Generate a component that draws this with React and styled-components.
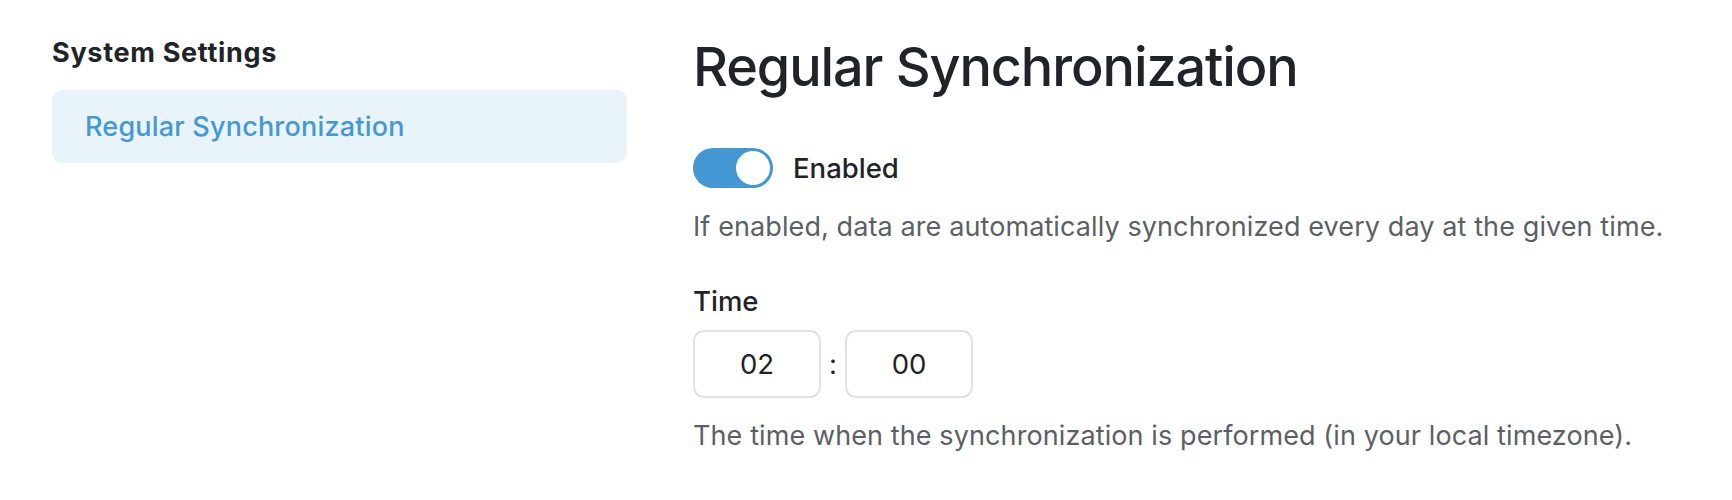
import React, { useState } from "react";
import styled, { createGlobalStyle } from "styled-components";

const GlobalStyle = createGlobalStyle`
  * { box-sizing: border-box; }
  body {
    margin: 0;
    background: #ffffff;
    font-family: Inter, "Noto Sans", sans-serif;
    color: #202328;
  }
`;

const Page = styled.div`
  display: flex;
  align-items: flex-start;
  gap: 66px;
  padding: 33px 0 0 52px;
`;

const Sidebar = styled.aside`
  width: 575px;
  flex-shrink: 0;
  display: flex;
  flex-direction: column;
`;

const SidebarTitle = styled.h2`
  margin: 0 0 17px;
  font-size: 27px;
  line-height: 40px;
  font-weight: 700;
  letter-spacing: 0.7px;
  color: #202328;
`;

const NavItem = styled.div`
  height: 73px;
  display: flex;
  align-items: center;
  padding: 0 33px;
  border-radius: 11px;
  background: ${(p) => (p.active ? "#e8f3fa" : "transparent")};
  color: ${(p) => (p.active ? "#4498d3" : "#202328")};
  font-size: 27px;
  font-weight: 500;
  letter-spacing: 0.2px;
`;

const Main = styled.main`
  display: flex;
  flex-direction: column;
  align-items: flex-start;
`;

const Heading = styled.h1`
  margin: 0 0 48px;
  font-size: 54px;
  line-height: 67px;
  font-weight: 500;
  letter-spacing: -1.1px;
  color: #202328;
`;

const ToggleRow = styled.label`
  display: flex;
  align-items: center;
  gap: 20px;
  height: 40px;
  cursor: pointer;
`;

const Track = styled.span`
  position: relative;
  width: 80px;
  height: 40px;
  border-radius: 20px;
  background: ${(p) => (p.on ? "#4398d4" : "#d5d9de")};
  transition: background 0.2s;
`;

const Knob = styled.span`
  position: absolute;
  top: 1px;
  left: ${(p) => (p.on ? "41px" : "1px")};
  width: 38px;
  height: 38px;
  border-radius: 50%;
  background: #ffffff;
  border: 2px solid ${(p) => (p.on ? "#4398d4" : "#d5d9de")};
  transition: left 0.2s;
`;

const Label = styled.span`
  font-size: 27.5px;
  line-height: 40px;
  font-weight: 500;
  color: #202328;
`;

const Help = styled.p`
  margin: ${(p) => p.margin || "0"};
  font-size: 27px;
  line-height: 42px;
  letter-spacing: 0.1px;
  color: #5b5f66;
`;

const FieldLabel = styled.div`
  margin-top: 32px;
  font-size: 27.5px;
  line-height: 42px;
  font-weight: 500;
  color: #202328;
`;

const TimeRow = styled.div`
  display: flex;
  align-items: center;
  margin-top: 8px;
`;

const TimeInput = styled.input`
  width: 128px;
  height: 68px;
  border: 2px solid #dfe2e6;
  border-radius: 11px;
  background: #ffffff;
  text-align: center;
  font-family: inherit;
  font-size: 27.5px;
  color: #202328;
  outline: none;
`;

const Colon = styled.span`
  width: 24px;
  text-align: center;
  font-size: 27.5px;
  color: #202328;
`;

export default function App() {
  const [enabled, setEnabled] = useState(true);
  const [hours, setHours] = useState("02");
  const [minutes, setMinutes] = useState("00");

  return (
    <>
      <GlobalStyle />
      <Page>
        <Sidebar>
          <SidebarTitle>System Settings</SidebarTitle>
          <NavItem active>Regular Synchronization</NavItem>
        </Sidebar>
        <Main>
          <Heading>Regular Synchronization</Heading>
          <ToggleRow onClick={() => setEnabled(!enabled)}>
            <Track on={enabled ? 1 : 0}>
              <Knob on={enabled ? 1 : 0} />
            </Track>
            <Label>Enabled</Label>
          </ToggleRow>
          <Help margin="18px 0 0">
            If enabled, data are automatically synchronized every day at the given time.
          </Help>
          <FieldLabel>Time</FieldLabel>
          <TimeRow>
            <TimeInput value={hours} onChange={(e) => setHours(e.target.value)} />
            <Colon>:</Colon>
            <TimeInput value={minutes} onChange={(e) => setMinutes(e.target.value)} />
          </TimeRow>
          <Help margin="17px 0 0">
            The time when the synchronization is performed (in your local timezone).
          </Help>
        </Main>
      </Page>
    </>
  );
}
